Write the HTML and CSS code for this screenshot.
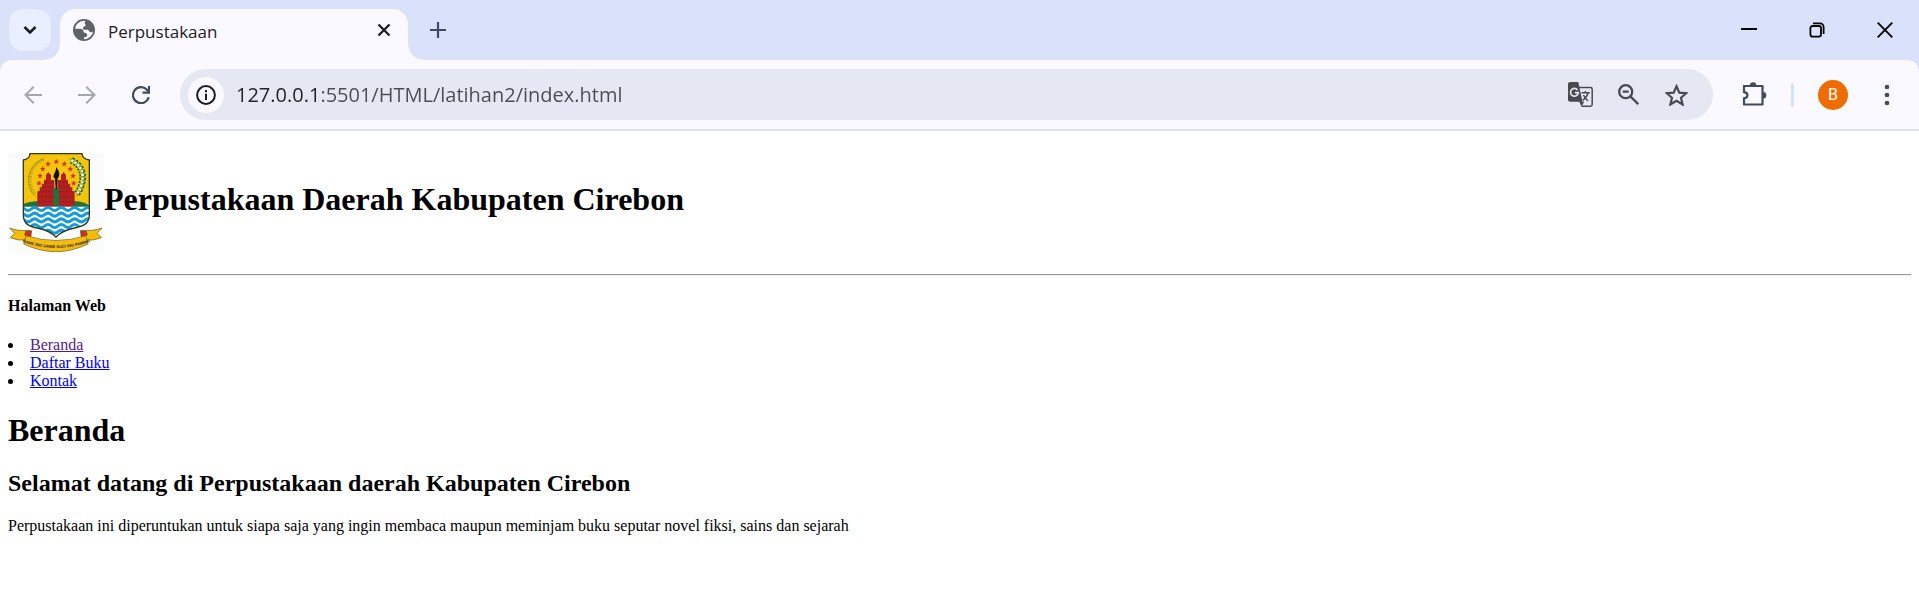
FILE: index.html
```html
<!DOCTYPE html>
<html lang="id">
<head>
<meta charset="utf-8">
<title>Perpustakaan</title>
<link rel="stylesheet" href="styles.css">
</head>
<body>
<div class="chrome">
  <div class="tab-strip">
    <button class="tab-search" aria-label="Cari tab">
      <svg width="16" height="16" viewBox="0 0 16 16"><path d="M2.500 5l5.500 5.500L13.500 5" fill="none" stroke="#1b1d22" stroke-width="2.600"/></svg>
    </button>
    <div class="tab">
      <svg width="22" height="22" viewBox="0 0 24 24"><circle cx="12" cy="12" r="11" fill="#faf9ff" stroke="#5f6368" stroke-width="2"/><path d="M14 1.500C12.500 3 12.500 4.500 13.500 6c.5 1 0 2-1 2.200-1.300.3-2 1-1.600 2.300.3.800 1 1.200 2 1.200h2.600c1 0 1.700.6 2 1.500.4 1 1.300 1.300 2.300 1.200 1.300-.2 2.500-.8 3.500-2C23 7 19 2 14 1.500zM1 10.500h6.500c2.500 0 4 1.300 4 3.200 0 .8.400 1.300 1.300 1.300 1.700 0 2.700 1 2.700 2.500s-1 2.200-2.500 2.200c-.7 0-1 .5-1 1.300v2C6 23 0 18 1 10.500z" fill="#5f6368"/></svg>
      <span class="tab-title">Perpustakaan</span>
      <button class="icon-button" aria-label="Tutup tab">
        <svg width="14" height="14" viewBox="0 0 14 14"><path d="M1.500 1.500l11 11M12.500 1.500l-11 11" stroke="#1b1d22" stroke-width="2.300"/></svg>
      </button>
    </div>
    <button class="icon-button new-tab" aria-label="Tab baru">
      <svg width="16" height="16" viewBox="0 0 16 16"><path d="M8 0v16M0 8h16" stroke="#414a5e" stroke-width="2.200"/></svg>
    </button>
    <div class="window-controls">
      <button aria-label="Kecilkan"><svg width="16" height="16" viewBox="0 0 16 16"><path d="M0 7h16" stroke="#000" stroke-width="2"/></svg></button>
      <button aria-label="Pulihkan"><svg width="16" height="16" viewBox="0 0 16 16" fill="none" stroke="#000" stroke-width="1.800"><rect x="1.400" y="4" width="10.600" height="10.600" rx="2"/><path d="M4 1.400h7a3.600 3.600 0 0 1 3.600 3.600v7"/></svg></button>
      <button aria-label="Tutup"><svg width="16" height="16" viewBox="0 0 16 16"><path d="M.7.700l14.600 14.600M15.300.700L.7 15.300" stroke="#000" stroke-width="1.900"/></svg></button>
    </div>
  </div>
  <div class="toolbar">
    <div class="nav-buttons">
      <button class="icon-button" aria-label="Kembali"><svg width="18" height="18" viewBox="0 0 18 18" fill="none" stroke="#a6a7ac" stroke-width="2"><path d="M18 9H1.500M9.700.8L1.500 9l8.200 8.200"/></svg></button>
      <button class="icon-button" aria-label="Maju"><svg width="18" height="18" viewBox="0 0 18 18" fill="none" stroke="#a6a7ac" stroke-width="2"><path d="M0 9h16.500M8.300.8L16.500 9l-8.200 8.200"/></svg></button>
      <button class="icon-button" aria-label="Muat ulang"><svg width="18" height="18" viewBox="0 0 18 18" fill="none" stroke="#414a5e" stroke-width="2.200"><path d="M16.700 11.300A8 8 0 1 1 14.900 3.700L17 6"/><path d="M17 0v6.700h-6.500"/></svg></button>
    </div>
    <div class="address">
      <button class="site-info" aria-label="Informasi situs"><svg width="20" height="20" viewBox="0 0 20 20"><circle cx="10" cy="10" r="8.900" fill="none" stroke="#1b1d22" stroke-width="2"/><path d="M10 8.700v6.200M10 5v2.200" stroke="#1b1d22" stroke-width="2"/></svg></button>
      <input class="url" type="text" aria-label="Alamat" value="127.0.0.1:5501/HTML/latihan2/index.html">
      <div class="address-actions">
        <button class="icon-button" aria-label="Terjemahkan"><svg width="25" height="25" viewBox="0 0 25 25"><path d="M11 5.500h11.500a1.700 1.700 0 0 1 1.700 1.700v15.300a1.700 1.700 0 0 1-1.700 1.700H13.500" fill="none" stroke="#474a50" stroke-width="1.500"/><path d="M2 0h8.300l4.200 19.800H2a2 2 0 0 1-2-2V2a2 2 0 0 1 2-2zM11.300 19.800h5l-2.800 4.600z" fill="#474a50"/><path d="M9.500 7.900A3.900 3.900 0 1 0 10.300 10.700H6.800" fill="none" stroke="#e5e8f3" stroke-width="1.700"/><path d="M13.500 10.800h8.300M17.400 9v1.800M20 11c-.7 3-2.700 5.500-5.300 7.500M15.500 13c1 2.500 2.700 4.200 4.500 6" fill="none" stroke="#474a50" stroke-width="1.400"/></svg></button>
        <button class="icon-button" aria-label="Zoom"><svg width="21" height="21" viewBox="0 0 21 21" fill="none" stroke="#474a50" stroke-width="2.300"><circle cx="7.700" cy="7.700" r="6.500"/><path d="M12.400 12.400l7.800 7.800M4.700 7.700h6"/></svg></button>
        <button class="icon-button" aria-label="Tandai halaman"><svg width="23" height="22" viewBox="0 0 23 22"><path d="M11.500 2.300l2.800 6.300 6.900.6-5.200 4.600 1.600 6.700-6.100-3.600-6.100 3.600L7 13.800 1.800 9.200l6.900-.6z" fill="none" stroke="#474a50" stroke-width="2.200"/></svg></button>
      </div>
    </div>
    <div class="toolbar-actions">
      <button class="icon-button" aria-label="Ekstensi"><svg width="25" height="25" viewBox="0 0 25 25"><path d="M2 4h18.500v18.500H2v-6.200c4.600-.6 4.600-5.500 0-6.100z" fill="none" stroke="#414a5e" stroke-width="2.200" stroke-linejoin="round"/><path d="M7.900 3.500a3.200 3.200 0 0 1 6.400 0zM21 10a3.300 3.300 0 0 1 0 6.600z" fill="#414a5e"/></svg></button>
      <span class="separator"></span>
      <button class="avatar" aria-label="Profil B">B</button>
      <button class="icon-button" aria-label="Menu"><svg width="6" height="22" viewBox="0 0 6 22" fill="#414a5e"><circle cx="3" cy="3" r="2.300"/><circle cx="3" cy="11" r="2.300"/><circle cx="3" cy="19" r="2.300"/></svg></button>
    </div>
  </div>
</div>
<main class="page">
  <h1><svg class="crest" width="96" height="99" viewBox="0 0 288 297" role="img" aria-label="Lambang Kabupaten Cirebon">
    <defs>
      <clipPath id="shield"><path d="M66 2H222Q223 18 244 21V186C244 211 228 219 200 225Q162 233 144 252Q126 233 88 225C60 219 46 211 46 186V21Q65 18 66 2z"/></clipPath>
      <path id="star" d="M0-9l2.300 6h6.300L3.500 1l2 6.500L0 3.600l-5.500 3.900 2-6.500-5.100-4h6.300z"/>
      <path id="wave" d="M30 0q10-9 20 0t20 0 20 0 20 0 20 0 20 0 20 0 20 0 20 0 20 0 20 0"/>
    </defs>
    <rect width="288" height="297" fill="#fafcfc"/>
    <g clip-path="url(#shield)">
      <path d="M40 0h210v162H40z" fill="#f5c40c"/>
      <path d="M40 162V155Q65 144 88 145H205Q235 148 250 162z" fill="#22713a"/>
      <path d="M88 161V115h7v-12h7V92h6V80h6V66l7-9 8 10v14h10v80zM200 161V115h-7v-12h-7V92h-6V80h-6V66l-7-9-8 10v14h-10v80z" fill="#b51f20"/>
      <path d="M91 116h45M100 102h36M108 89h28M90 131h46M90 146h46M152 116h45M152 102h36M152 89h28M152 131h46M152 146h46" stroke="#68251a" stroke-width="2" stroke-dasharray="7 3"/>
      <path d="M136 106h17v56h-17z" fill="#22713a"/>
      <path d="M141 73h8l-2 36h-4z" fill="#111"/><path d="M138 76c-5-13 8-19 6-34 12 14 12 24 6 34z" fill="#111"/>
      <path d="M40 161h210v100H40z" fill="#fff"/>
      <g fill="none" stroke="#159bd8" stroke-width="9"><use href="#wave" y="168"/><use href="#wave" y="185"/><use href="#wave" y="202"/><use href="#wave" y="219"/><use href="#wave" y="236"/></g>
      <g fill="#e02a20"><use href="#star" x="145" y="26"/><use href="#star" x="120" y="33"/><use href="#star" x="169" y="33"/><use href="#star" x="104" y="48"/><use href="#star" x="187" y="48"/><use href="#star" x="96" y="69"/><use href="#star" x="195" y="69"/><use href="#star" x="93" y="91"/><use href="#star" x="197" y="91"/></g>
      <path d="M109 16C77 29 57 59 62 92Q65 115 84 130" fill="none" stroke="#8b8a19" stroke-width="2"/>
      <path d="M106 19C74 35 63 61 66 91Q70 112 81 124" fill="none" stroke="#998d16" stroke-width="11" stroke-dasharray="2 4"/>
      <path d="M184 17C223 28 235 66 225 97Q220 115 205 130" fill="none" stroke="#206f3e" stroke-width="2"/>
      <path d="M190 22C222 37 230 65 220 96Q216 111 207 122" fill="none" stroke="#176b3d" stroke-width="20" stroke-dasharray="7 4"/>
      <path d="M190 22C222 37 230 65 220 96Q216 111 207 122" fill="none" stroke="#eff6d8" stroke-width="9" stroke-dasharray="6 5"/>
    </g>
    <path d="M66 2H222Q223 18 244 21V186C244 211 228 219 200 225Q162 233 144 252Q126 233 88 225C60 219 46 211 46 186V21Q65 18 66 2z" fill="none" stroke="#343722" stroke-width="4"/>
    <g stroke="#695813" stroke-width="2" stroke-linejoin="round">
      <path d="M5 225Q28 235 65 232L55 261Q31 264 7 254L20 241zM282 225Q257 235 221 232L232 261Q256 264 280 254L267 241z" fill="#f4bd0c"/>
      <path d="M53 235l18-2-3 22-18-9zM235 235l-18-2 3 22 18-9z" fill="#d42c21"/>
      <path d="M55 248Q144 277 233 248L240 273Q144 319 47 273z" fill="#f4bd0c"/>
    </g>
    <path id="motto-path" d="M44 267Q144 303 246 267" fill="none"/>
    <text class="motto"><textPath href="#motto-path" startOffset="50%">RAME ING GAWE SUCI ING PAMRIH</textPath></text>
  </svg>Perpustakaan Daerah Kabupaten Cirebon</h1>
  <hr>
  <nav>
    <h4>Halaman Web</h4>
    <ul class="links">
      <li><a class="visited" href="#beranda">Beranda</a></li>
      <li><a href="#daftar-buku">Daftar Buku</a></li>
      <li><a href="#kontak">Kontak</a></li>
    </ul>
  </nav>
  <h1 id="beranda">Beranda</h1>
  <h2>Selamat datang di Perpustakaan daerah Kabupaten Cirebon</h2>
  <p>Perpustakaan ini diperuntukan untuk siapa saja yang ingin membaca maupun meminjam buku seputar novel fiksi, sains dan sejarah</p>
</main>
</body>
</html>
```
FILE: styles.css
```css
* { box-sizing: border-box; }

body {
  margin: 0;
  background: #fff;
  color: #000;
  font-family: "Liberation Serif", "Times New Roman", serif;
  font-size: 16px;
}

button {
  display: flex;
  align-items: center;
  justify-content: center;
  flex: none;
  padding: 0;
  border: 0;
  background: none;
}

svg { flex: none; }

/* Browser frame */
.chrome {
  background: #dae1fa;
  font-family: "Open Sans", "Noto Sans", sans-serif;
}

.tab-strip {
  display: flex;
  align-items: center;
  height: 60px;
  padding-left: 9px;
}

.tab-search {
  width: 42px;
  height: 42px;
  margin-right: 9px;
  border-radius: 14px;
  background: #e9effe;
}

.tab {
  position: relative;
  display: flex;
  align-items: center;
  align-self: flex-end;
  gap: 13px;
  width: 348px;
  height: 51px;
  padding: 0 12px 9px 13px;
  border-radius: 15px 15px 0 0;
  background: #faf9ff;
}

.tab::before,
.tab::after {
  content: "";
  position: absolute;
  bottom: 0;
  width: 15px;
  height: 15px;
}

.tab::before {
  right: 100%;
  background: radial-gradient(circle at 0 0, transparent 14px, #faf9ff 15px);
}

.tab::after {
  left: 100%;
  background: radial-gradient(circle at 100% 0, transparent 14px, #faf9ff 15px);
}

.tab-title {
  flex: 1;
  padding-top: 3px;
  color: #1f2126;
  font-size: 17px;
  line-height: 24px;
}

.icon-button {
  width: 24px;
  height: 30px;
}

.new-tab { margin-left: 18px; }

.window-controls {
  display: flex;
  margin-left: auto;
}

.window-controls button {
  width: 68px;
  height: 60px;
}

.toolbar {
  display: flex;
  align-items: center;
  height: 71px;
  padding: 0 20px 0 21px;
  border-bottom: 2px solid #dfe3eb;
  border-radius: 12px 12px 0 0;
  background: #faf9ff;
}

.nav-buttons {
  display: flex;
  gap: 30px;
  margin-right: 27px;
}

.address {
  display: flex;
  align-items: center;
  flex: 1;
  height: 51px;
  padding: 0 25px 0 8px;
  border-radius: 26px;
  background: #e5e8f3;
}

.site-info {
  width: 36px;
  height: 36px;
  border-radius: 50%;
  background: #faf9ff;
}

.url {
  flex: 1;
  min-width: 0;
  padding: 0 0 0 12px;
  border: 0;
  outline: 0;
  background: linear-gradient(90deg, #1f2126 93px, #4a4c53 93px);
  background-clip: text;
  color: transparent;
  font-family: inherit;
  font-size: 20px;
  line-height: 30px;
}

.address-actions {
  display: flex;
  gap: 24px;
}

.toolbar-actions {
  display: flex;
  align-items: center;
  margin-left: 29px;
}

.separator {
  width: 3px;
  height: 24px;
  margin: 0 24px 0 25px;
  border-radius: 2px;
  background: #d5e2fc;
}

.avatar {
  width: 30px;
  height: 30px;
  margin-right: 27px;
  border-radius: 50%;
  background: #ef6c00;
  color: #fff;
  font-family: Roboto, sans-serif;
  font-size: 16px;
}

/* Web page */
.page {
  display: flow-root;
  padding: 1px 8px 0;
}

hr {
  border: 0;
  border-top: 1px solid #9a9a9a;
  border-bottom: 1px solid #eee;
}

.crest {
  overflow: visible;
  vertical-align: middle;
}

.motto {
  fill: #282407;
  font-family: "Liberation Sans Narrow", "Liberation Sans", sans-serif;
  font-size: 12px;
  font-weight: bold;
  text-anchor: middle;
}

.links {
  margin: 0;
  padding: 0;
  list-style-position: inside;
}

a { color: #0000ee; }

.visited { color: #551a8b; }
```
